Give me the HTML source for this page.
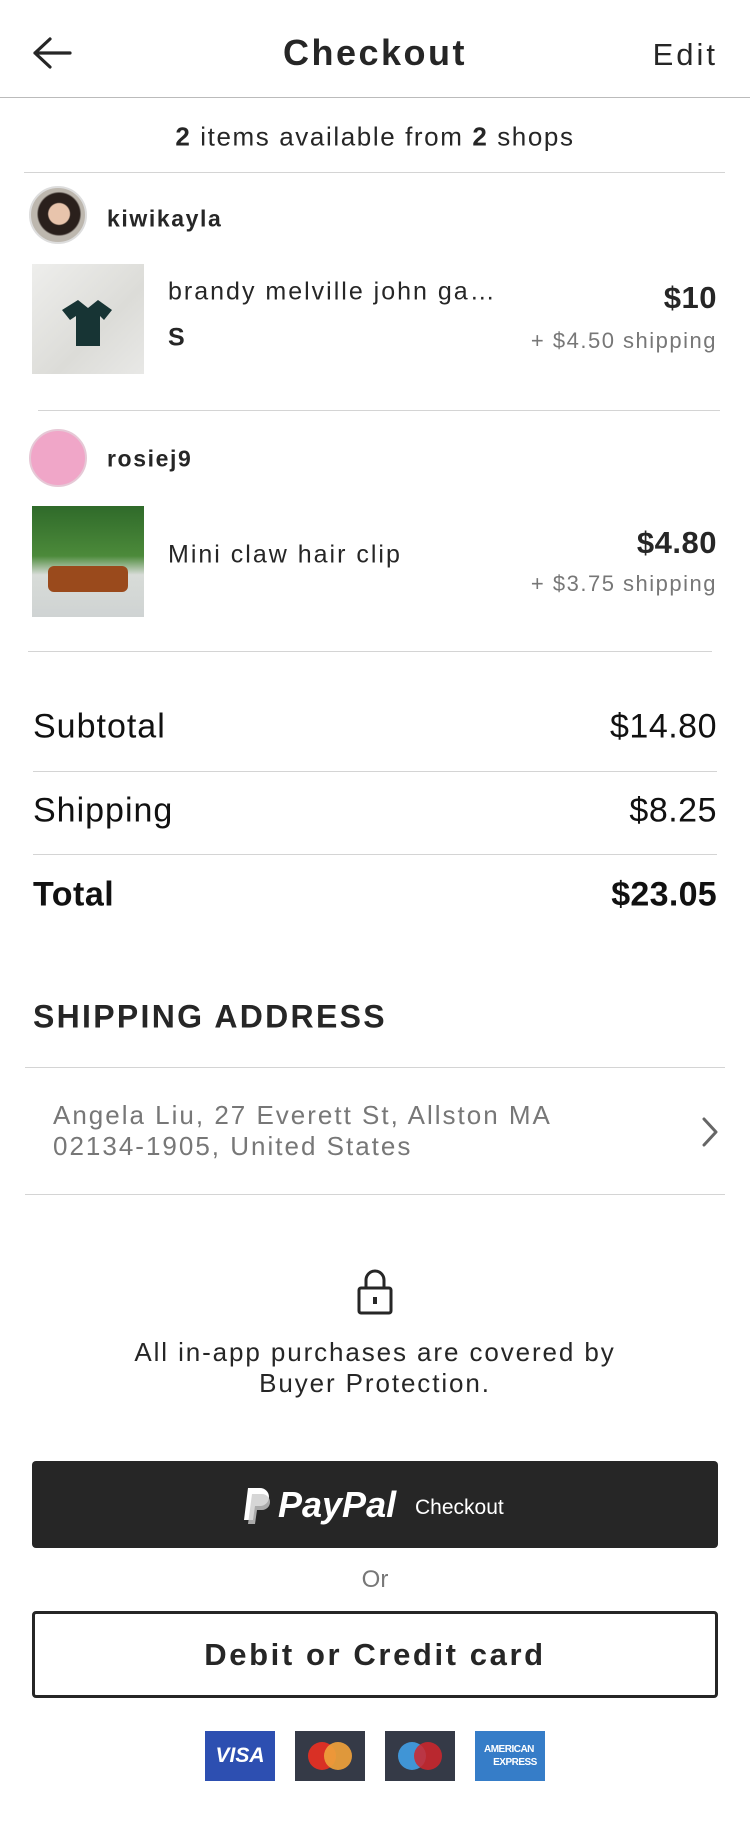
<!DOCTYPE html>
<html><head><meta charset="utf-8"><style>
*{margin:0;padding:0;box-sizing:border-box}
body{width:750px;height:1846px;background:#fff;font-family:"Liberation Sans",sans-serif;color:#262626;position:relative;overflow:hidden}
.a{position:absolute;white-space:nowrap}
.hr{position:absolute;height:1px;background:#d4d4d4}
.c{transform:translateY(-50%)}
</style></head><body>
<svg class="a" style="left:32px;top:37px" width="40" height="32" viewBox="0 0 40 32"><path d="M18 2 L3 16 L18 30 M3 16 H38" fill="none" stroke="#262626" stroke-width="3.2" stroke-linecap="round" stroke-linejoin="round"/></svg>
<div class="a c" style="left:0;width:750px;text-align:center;top:53px;font-size:36px;font-weight:bold;letter-spacing:2.5px">Checkout</div>
<div class="a c" style="right:32px;top:55px;font-size:31px;letter-spacing:3px">Edit</div>
<div class="hr" style="left:0;width:750px;top:97px;background:#bbb"></div>
<div class="a c" style="left:0;width:750px;text-align:center;top:137px;font-size:26px;letter-spacing:1.6px"><b>2</b> items available from <b>2</b> shops</div>
<div class="hr" style="left:24px;width:701px;top:172px"></div>

<div class="a" style="left:29px;top:186px;width:58px;height:58px;border-radius:50%;background:radial-gradient(ellipse at 52% 48%,#e8c4ac 0 26%,#2a201c 29% 52%,#bdb7ae 56%);border:2px solid #ddd"></div>
<div class="a c" style="left:107px;top:219px;font-size:23px;font-weight:bold;letter-spacing:1.6px">kiwikayla</div>
<div class="a" style="left:32px;top:264px;width:112px;height:110px;background:linear-gradient(135deg,#eeeeec,#dcdcd8 60%,#e8e8e6)"></div>
<svg class="a" style="left:58px;top:294px" width="60" height="60" viewBox="0 0 60 60"><path d="M20 6 L30 14 L40 6 L54 16 L46 26 L42 22 L42 52 L18 52 L18 22 L12 26 L4 16 Z" fill="#173434"/></svg>
<div class="a c" style="left:168px;top:292px;font-size:25px;letter-spacing:2px">brandy melville john ga…</div>
<div class="a c" style="left:168px;top:338px;font-size:25px;font-weight:bold">S</div>
<div class="a c" style="right:33px;top:298px;font-size:31px;font-weight:bold;letter-spacing:0.5px">$10</div>
<div class="a c" style="right:33px;top:341px;font-size:22px;color:#777;letter-spacing:1.5px">+ $4.50 shipping</div>
<div class="hr" style="left:38px;width:682px;top:410px"></div>

<div class="a" style="left:29px;top:429px;width:58px;height:58px;border-radius:50%;background:#f0a6c8;border:2px solid #e6c8d6"></div>
<div class="a c" style="left:107px;top:459px;font-size:23px;font-weight:bold;letter-spacing:1.6px">rosiej9</div>
<div class="a" style="left:32px;top:506px;width:112px;height:111px;background:linear-gradient(180deg,#2f6a2a 0,#4c8a3a 45%,#d8dcd8 62%,#cfd3d3 100%)"></div>
<div class="a" style="left:48px;top:566px;width:80px;height:26px;border-radius:6px;background:#9a4a1c"></div>
<div class="a c" style="left:168px;top:555px;font-size:25px;letter-spacing:2px">Mini claw hair clip</div>
<div class="a c" style="right:33px;top:543px;font-size:31px;font-weight:bold;letter-spacing:0.5px">$4.80</div>
<div class="a c" style="right:33px;top:584px;font-size:22px;color:#777;letter-spacing:1.5px">+ $3.75 shipping</div>
<div class="hr" style="left:28px;width:684px;top:651px"></div>

<div class="a c" style="left:33px;top:727px;font-size:34px;color:#111;letter-spacing:1px">Subtotal</div>
<div class="a c" style="right:33px;top:727px;font-size:34px;color:#111;letter-spacing:0.5px">$14.80</div>
<div class="hr" style="left:33px;width:684px;top:771px"></div>
<div class="a c" style="left:33px;top:811px;font-size:34px;color:#111;letter-spacing:1px">Shipping</div>
<div class="a c" style="right:33px;top:811px;font-size:34px;color:#111;letter-spacing:0.5px">$8.25</div>
<div class="hr" style="left:33px;width:684px;top:854px"></div>
<div class="a c" style="left:33px;top:895px;font-size:34px;font-weight:bold;color:#111;letter-spacing:0.5px">Total</div>
<div class="a c" style="right:33px;top:895px;font-size:34px;font-weight:bold;color:#111;letter-spacing:0.3px">$23.05</div>

<div class="a c" style="left:33px;top:1017px;font-size:32px;font-weight:bold;letter-spacing:2.3px">SHIPPING ADDRESS</div>
<div class="hr" style="left:25px;width:700px;top:1067px"></div>
<div class="a" style="left:53px;top:1100px;font-size:26px;line-height:31px;color:#777;letter-spacing:2px">Angela Liu, 27 Everett St, Allston MA<br>02134-1905, United States</div>
<svg class="a" style="left:700px;top:1116px" width="20" height="32" viewBox="0 0 20 32"><path d="M4 3 L16 16 L4 29" fill="none" stroke="#666" stroke-width="3" stroke-linecap="round" stroke-linejoin="round"/></svg>
<div class="hr" style="left:25px;width:700px;top:1194px"></div>

<svg class="a" style="left:356px;top:1268px" width="38" height="48" viewBox="0 0 38 48"><path d="M10 20 V12 a9 9 0 0 1 18 0 V20" fill="none" stroke="#262626" stroke-width="3"/><rect x="3" y="20" width="32" height="25" rx="2" fill="none" stroke="#262626" stroke-width="3"/><rect x="17" y="29" width="4" height="7" fill="#262626"/></svg>
<div class="a" style="left:0;width:750px;text-align:center;top:1337px;font-size:26px;line-height:31px;letter-spacing:1.9px">All in-app purchases are covered by<br>Buyer Protection.</div>

<div class="a" style="left:32px;top:1461px;width:686px;height:87px;background:#262626;border-radius:4px"></div>
<svg class="a" style="left:242px;top:1486px" width="30" height="40" viewBox="0 0 30 40"><path d="M6 2 H18 a9 9 0 0 1 0 18 H13 L11 34 H2 Z" fill="#fff"/><path d="M10 8 H20 a8 8 0 0 1 0 16 H15 L13 38 H6 Z" fill="#ccc" opacity=".8"/></svg>
<div class="a c" style="left:278px;top:1505px;font-size:36px;font-weight:bold;font-style:italic;color:#fff">PayPal</div>
<div class="a c" style="left:415px;top:1508px;font-size:21px;color:#fff">Checkout</div>
<div class="a c" style="left:0;width:750px;text-align:center;top:1580px;font-size:24px;color:#777">Or</div>
<div class="a" style="left:32px;top:1611px;width:686px;height:87px;border:3px solid #262626;border-radius:4px"></div>
<div class="a c" style="left:0;width:750px;text-align:center;top:1655px;font-size:31px;font-weight:bold;letter-spacing:2.6px">Debit or Credit card</div>

<div class="a" style="left:205px;top:1731px;width:70px;height:50px;background:#2d4fb1;color:#fff;font-weight:bold;font-style:italic;font-size:21px;text-align:center;line-height:50px">VISA</div>
<div class="a" style="left:295px;top:1731px;width:70px;height:50px;background:#353a47"><div class="a" style="left:13px;top:11px;width:28px;height:28px;border-radius:50%;background:#d93025"></div><div class="a" style="left:29px;top:11px;width:28px;height:28px;border-radius:50%;background:#eea13b;opacity:.92"></div></div>
<div class="a" style="left:385px;top:1731px;width:70px;height:50px;background:#353a47"><div class="a" style="left:13px;top:11px;width:28px;height:28px;border-radius:50%;background:#4095d6"></div><div class="a" style="left:29px;top:11px;width:28px;height:28px;border-radius:50%;background:#d0262c;opacity:.85"></div></div>
<div class="a" style="left:475px;top:1731px;width:70px;height:50px;background:#367dc8;color:#fff;font-weight:bold;font-size:10px;line-height:13px;padding:12px 0 0 9px;letter-spacing:-0.5px">AMERICAN<br>&nbsp;&nbsp;&nbsp;&nbsp;EXPRESS</div>
</body></html>
